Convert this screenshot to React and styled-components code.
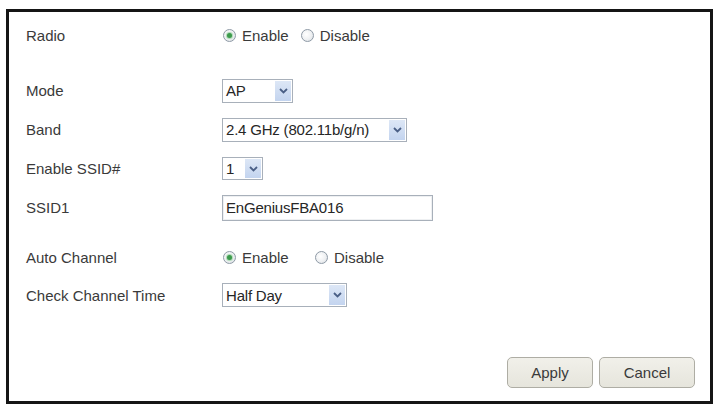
import React from "react"
import styled, { createGlobalStyle } from "styled-components"

const GlobalStyle = createGlobalStyle`
  html, body {
    margin: 0;
    padding: 0;
    background: #fff;
  }
  body {
    font-family: "Liberation Sans", Arial, sans-serif;
    font-size: 15px;
    color: #3a3a3a;
  }
`

const Frame = styled.div`
  box-sizing: border-box;
  width: 707px;
  height: 395px;
  margin: 9px 0 0 6px;
  border: 3px solid #151515;
  display: flex;
  flex-direction: column;
  padding: 4px 15px 13px 17px;
`

const Row = styled.div`
  display: grid;
  grid-template-columns: 196px 1fr;
  align-items: center;
  height: ${p => p.h || 39}px;
  margin-top: ${p => p.gap || 0}px;
`

const Label = styled.span`
  color: #3a3a3a;
  white-space: nowrap;
`

const Options = styled.div`
  display: flex;
  align-items: center;
  padding-left: 1px;
`

const Option = styled.label`
  display: flex;
  align-items: center;
  width: ${p => (p.w ? p.w + "px" : "auto")};
  margin-right: ${p => p.mr || 0}px;
  color: #3a3a3a;
`

const Dot = styled.span`
  box-sizing: border-box;
  width: 13px;
  height: 13px;
  border-radius: 50%;
  border: 1px solid #8e9aa6;
  background: radial-gradient(circle at 40% 40%, #ffffff 0%, #eef0f2 55%, #d3d8dd 100%);
  display: flex;
  align-items: center;
  justify-content: center;
  margin-right: 6px;
  &::after {
    content: "";
    width: 5px;
    height: 5px;
    border-radius: 50%;
    background: ${p => (p.on ? "#3c9a4c" : "transparent")};
    box-shadow: ${p => (p.on ? "0 0 1px 1px #a9d7b1" : "none")};
  }
`

const SelectBox = styled.div`
  box-sizing: border-box;
  width: ${p => p.w}px;
  height: ${p => p.h || 24}px;
  border: 1px solid #a8b0ba;
  background: #fff;
  display: flex;
  align-items: stretch;
  color: #262626;
`

const SelectText = styled.span`
  flex: 1;
  display: flex;
  align-items: center;
  padding-left: 3px;
  white-space: nowrap;
  overflow: hidden;
  letter-spacing: -0.2px;
`

const Arrow = styled.span`
  width: 16px;
  margin: 1px;
  background: linear-gradient(#dde7f6, #c3d4ef);
  display: flex;
  align-items: center;
  justify-content: center;
`

const TextInput = styled.div`
  box-sizing: border-box;
  width: 211px;
  height: 26px;
  border: 1px solid #a8b0ba;
  box-shadow: inset 0 0 0 1px #eef0f2;
  display: flex;
  align-items: center;
  padding-left: 3px;
  color: #262626;
  letter-spacing: -0.2px;
`

const Footer = styled.div`
  margin-top: auto;
  display: flex;
  justify-content: flex-end;
  gap: 6px;
`

const Button = styled.button`
  box-sizing: border-box;
  width: ${p => p.w}px;
  height: 31px;
  border: 1px solid #aeada4;
  border-radius: 5px;
  background: linear-gradient(#f1f0ea, #e6e5dc);
  font-family: "Liberation Sans", Arial, sans-serif;
  font-size: 15px;
  color: #3a3a3a;
  padding: 0;
`

function Chevron() {
  return (
    <svg width="9" height="6" viewBox="0 0 9 6">
      <path d="M1 1 L4.5 4.5 L8 1" fill="none" stroke="#4a5f86" strokeWidth="1.8" />
    </svg>
  )
}

function Select({ value, w, h }) {
  return (
    <SelectBox w={w} h={h}>
      <SelectText>{value}</SelectText>
      <Arrow><Chevron /></Arrow>
    </SelectBox>
  )
}

function Radio({ on, children, w, mr }) {
  return (
    <Option w={w} mr={mr}>
      <Dot on={on} />
      {children}
    </Option>
  )
}

export default function App() {
  return (
    <>
      <GlobalStyle />
      <Frame>
        <Row h={38}>
          <Label>Radio</Label>
          <Options>
            <Radio on mr={12}>Enable</Radio>
            <Radio>Disable</Radio>
          </Options>
        </Row>
        <Row gap={17}>
          <Label>Mode</Label>
          <Select value="AP" w={71} />
        </Row>
        <Row>
          <Label>Band</Label>
          <Select value="2.4 GHz (802.11b/g/n)" w={185} />
        </Row>
        <Row>
          <Label>Enable SSID#</Label>
          <Select value="1" w={41} h={23} />
        </Row>
        <Row>
          <Label>SSID1</Label>
          <TextInput>EnGeniusFBA016</TextInput>
        </Row>
        <Row h={38} gap={11}>
          <Label>Auto Channel</Label>
          <Options>
            <Radio on w={92}>Enable</Radio>
            <Radio>Disable</Radio>
          </Options>
        </Row>
        <Row h={38}>
          <Label>Check Channel Time</Label>
          <Select value="Half Day" w={125} />
        </Row>
        <Footer>
          <Button w={86}>Apply</Button>
          <Button w={96}>Cancel</Button>
        </Footer>
      </Frame>
    </>
  )
}
